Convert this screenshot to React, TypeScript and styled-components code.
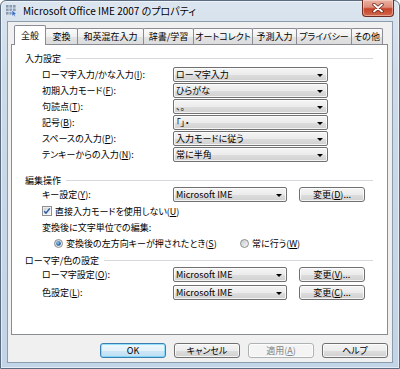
import React from "react";
import styled, { createGlobalStyle } from "styled-components";

const Global = createGlobalStyle`
  html, body { margin: 0; padding: 0; background: #ffffff; }
  body { width: 400px; height: 369px; overflow: hidden; }
  * { box-sizing: border-box; }
`;

const UI_FONT = `"Noto Sans CJK JP", "Noto Sans", sans-serif`;

const Window = styled.div`
  width: 400px;
  height: 369px;
  display: flex;
  flex-direction: column;
  background: linear-gradient(180deg, #dbe5ef 0%, #cddbe9 20%, #c2d4e7 100%);
  border: 1px solid #5b6c80;
  border-radius: 6px 6px 0 0;
  box-shadow: inset 0 0 0 1px rgba(255, 255, 255, 0.55);
  font-family: ${UI_FONT};
  font-feature-settings: "palt";
  color: #000;
`;

const TitleBar = styled.div`
  height: 20px;
  display: flex;
  align-items: flex-start;
  padding-left: 4px;
`;

const TitleIcon = styled.svg`
  width: 13px;
  height: 13px;
  margin-top: 3px;
  flex: none;
`;

const TitleText = styled.div`
  margin-left: 5px;
  font-size: 10px;
  line-height: 19px;
  white-space: nowrap;
  text-shadow: 0 0 6px rgba(255, 255, 255, 0.9);
`;

const CloseButton = styled.div`
  margin-left: auto;
  margin-right: 5px;
  margin-top: -1px;
  width: 32px;
  height: 17px;
  border: 1px solid #6e2c22;
  border-top: none;
  border-radius: 0 0 4px 4px;
  background: linear-gradient(180deg, #eab3a5 0%, #dd8d78 45%, #c6442a 55%, #d2684b 100%);
  box-shadow: inset 0 0 0 1px rgba(255, 220, 210, 0.5);
  display: flex;
  align-items: center;
  justify-content: center;
`;

const Client = styled.div`
  flex: 1;
  margin: 0 6px 5px;
  background: #f0f0f0;
  border: 1px solid #8d9cad;
  display: flex;
  flex-direction: column;
  padding: 3px 4px 0 3px;
`;

const TabStrip = styled.div`
  height: 19px;
  display: flex;
  align-items: flex-end;
  padding-left: 3px;
  flex: none;
`;

const Tab = styled.div<{ $w: number; $active?: boolean }>`
  position: relative;
  z-index: ${(p) => (p.$active ? 2 : 1)};
  width: ${(p) => p.$w}px;
  height: ${(p) => (p.$active ? 20 : 16)}px;
  margin-bottom: ${(p) => (p.$active ? -1 : 0)}px;
  margin-left: -1px;
  &:first-child { margin-left: 0; }
  border: 1px solid #898c95;
  border-bottom: none;
  border-radius: 2px 2px 0 0;
  background: ${(p) =>
    p.$active
      ? "#ffffff"
      : "linear-gradient(180deg, #fbfbfb 0%, #f0f0f0 50%, #e3e3e3 51%, #dcdcdc 100%)"};
  display: flex;
  align-items: center;
  justify-content: center;
  font-size: 9px;
  white-space: nowrap;
  padding-bottom: ${(p) => (p.$active ? 1 : 0)}px;
`;

const Panel = styled.div`
  flex: 1;
  background: #ffffff;
  border: 1px solid #898c95;
  padding: 7px 14px 0 13px;
  display: flex;
  flex-direction: column;
`;

const Heading = styled.div<{ $mt: number }>`
  margin-top: ${(p) => p.$mt}px;
  height: 12px;
  display: flex;
  align-items: center;
  gap: 5px;
  font-size: 9px;
  white-space: nowrap;
  &::after {
    content: "";
    flex: 1;
    height: 1px;
    background: #d5d9dd;
  }
`;

const FieldGrid = styled.div<{ $cols: string; $gap: number; $mt: number }>`
  margin: ${(p) => p.$mt}px 0 0 17px;
  display: grid;
  grid-template-columns: ${(p) => p.$cols};
  grid-auto-rows: 15px;
  row-gap: ${(p) => p.$gap}px;
  column-gap: 12px;
  align-items: center;
`;

const Label = styled.div`
  font-size: 9px;
  line-height: 15px;
  white-space: nowrap;
`;

const Acc = styled.span`
  text-decoration: underline;
`;

const ComboBox = styled.div`
  height: 15px;
  border: 1px solid #707070;
  border-radius: 2px;
  background: linear-gradient(180deg, #f4f4f4 0%, #ececec 50%, #dedede 51%, #d0d0d0 100%);
  box-shadow: inset 0 0 0 1px rgba(255, 255, 255, 0.75);
  display: flex;
  align-items: center;
  padding: 0 4px 0 2px;
  font-size: 9px;
  white-space: nowrap;
  overflow: hidden;
`;

const ComboValue = styled.span`
  flex: 1;
  overflow: hidden;
`;

const Arrow = styled.span`
  width: 0;
  height: 0;
  border-left: 3px solid transparent;
  border-right: 3px solid transparent;
  border-top: 3px solid #000;
  margin-top: 1px;
`;

const PushButton = styled.div<{ $variant?: "default" | "disabled" }>`
  height: 15px;
  width: 66px;
  border: 1px solid
    ${(p) => (p.$variant === "default" ? "#3c7fb1" : p.$variant === "disabled" ? "#adb2b5" : "#707070")};
  border-radius: 3px;
  background: ${(p) =>
    p.$variant === "disabled"
      ? "#f4f4f4"
      : p.$variant === "default"
      ? "linear-gradient(180deg, #eef7fc 0%, #e3f1fa 50%, #cfe7f6 51%, #bddff3 100%)"
      : "linear-gradient(180deg, #f4f4f4 0%, #ececec 50%, #dedede 51%, #d0d0d0 100%)"};
  box-shadow: inset 0 0 0 1px
    ${(p) => (p.$variant === "default" ? "rgba(72, 205, 250, 0.55)" : "rgba(255, 255, 255, 0.75)")};
  color: ${(p) => (p.$variant === "disabled" ? "#838383" : "#000")};
  display: flex;
  align-items: center;
  justify-content: center;
  font-size: 9px;
  white-space: nowrap;
`;

const OptionLine = styled.div<{ $ml: number; $mt?: number }>`
  margin: ${(p) => p.$mt ?? 0}px 0 0 ${(p) => p.$ml}px;
  height: 16px;
  display: flex;
  align-items: center;
  font-size: 9px;
  white-space: nowrap;
`;

const Choice = styled.div<{ $w?: number }>`
  display: flex;
  align-items: center;
  gap: 3px;
  width: ${(p) => (p.$w ? `${p.$w}px` : "auto")};
`;

const ButtonRow = styled.div`
  flex: none;
  display: flex;
  justify-content: flex-end;
  gap: 8px;
  padding: 8px 0 4px;
`;

const CheckBox = () => (
  <svg width="10" height="10" viewBox="0 0 10 10">
    <defs>
      <linearGradient id="cbg" x1="0" y1="0" x2="1" y2="1">
        <stop offset="0" stopColor="#cbcfd5" />
        <stop offset="1" stopColor="#f6f6f6" />
      </linearGradient>
    </defs>
    <rect x="0.5" y="0.5" width="9" height="9" fill="#fff" stroke="#8e8f8f" />
    <rect x="1.5" y="1.5" width="7" height="7" fill="url(#cbg)" />
    <path d="M2.2 5.2 L4 7.2 L7.8 2.4" fill="none" stroke="#2b5a9c" strokeWidth="1.5" />
  </svg>
);

const Radio = ({ on }: { on?: boolean }) => (
  <svg width="9" height="9" viewBox="0 0 9 9">
    <defs>
      <linearGradient id="rbg" x1="0" y1="0" x2="1" y2="1">
        <stop offset="0" stopColor="#c6cbd1" />
        <stop offset="1" stopColor="#f7f7f7" />
      </linearGradient>
      <radialGradient id="rdot" cx="0.4" cy="0.4" r="0.6">
        <stop offset="0" stopColor="#a7d4f5" />
        <stop offset="0.6" stopColor="#2f7cc4" />
        <stop offset="1" stopColor="#15467e" />
      </radialGradient>
    </defs>
    <circle cx="4.5" cy="4.5" r="4" fill="url(#rbg)" stroke="#8e8f8f" />
    {on && <circle cx="4.5" cy="4.5" r="2.3" fill="url(#rdot)" />}
  </svg>
);

const Combo = ({ value }: { value: string }) => (
  <ComboBox>
    <ComboValue>{value}</ComboValue>
    <Arrow />
  </ComboBox>
);

const tabs: { label: string; w: number; active?: boolean }[] = [
  { label: "全般", w: 32, active: true },
  { label: "変換", w: 33 },
  { label: "和英混在入力", w: 67 },
  { label: "辞書/学習", w: 51 },
  { label: "オートコレクト", w: 60 },
  { label: "予測入力", w: 45 },
  { label: "プライバシー", w: 56 },
  { label: "その他", w: 32 },
];

export default function App() {
  return (
    <>
      <Global />
      <Window>
        <TitleBar>
          <TitleIcon viewBox="0 0 13 13">
            {[0, 1, 2].map((r) =>
              [0, 1, 2].map((c) => (
                <rect
                  key={`${r}-${c}`}
                  x={1 + c * 3.5}
                  y={1 + r * 3.5}
                  width="2.6"
                  height="2.6"
                  fill={r === 2 && c === 2 ? "none" : "#8a9bb0"}
                />
              ))
            )}
            <path d="M7 6 L7 12.5 L8.6 11 L9.8 13 L10.8 12.4 L9.7 10.5 L11.8 10.3 Z" fill="#2f68c8" stroke="#fff" strokeWidth="0.6" />
          </TitleIcon>
          <TitleText>Microsoft Office IME 2007 のプロパティ</TitleText>
          <CloseButton>
            <svg width="12" height="10" viewBox="0 0 12 10">
              <path d="M2 1.5 L10 8.5 M10 1.5 L2 8.5" stroke="#6b2519" strokeWidth="3.4" strokeLinecap="round" />
              <path d="M2 1.5 L10 8.5 M10 1.5 L2 8.5" stroke="#ffffff" strokeWidth="1.8" strokeLinecap="round" />
            </svg>
          </CloseButton>
        </TitleBar>
        <Client>
          <TabStrip>
            {tabs.map((t) => (
              <Tab key={t.label} $w={t.w} $active={t.active}>
                {t.label}
              </Tab>
            ))}
          </TabStrip>
          <Panel>
            <Heading $mt={0}>入力設定</Heading>
            <FieldGrid $cols="119px 155px" $gap={1} $mt={3}>
              <Label>
                ローマ字入力/かな入力(<Acc>I</Acc>):
              </Label>
              <Combo value="ローマ字入力" />
              <Label>
                初期入力モード(<Acc>F</Acc>):
              </Label>
              <Combo value="ひらがな" />
              <Label>
                句読点(<Acc>T</Acc>):
              </Label>
              <Combo value="、。" />
              <Label>
                記号(<Acc>B</Acc>):
              </Label>
              <Combo value="「」・" />
              <Label>
                スペースの入力(<Acc>P</Acc>):
              </Label>
              <Combo value="入力モードに従う" />
              <Label>
                テンキーからの入力(<Acc>N</Acc>):
              </Label>
              <Combo value="常に半角" />
            </FieldGrid>

            <Heading $mt={12}>編集操作</Heading>
            <FieldGrid $cols="119px 114px 66px" $gap={3} $mt={1}>
              <Label>
                キー設定(<Acc>Y</Acc>):
              </Label>
              <Combo value="Microsoft IME" />
              <PushButton>
                変更(<Acc>D</Acc>)...
              </PushButton>
            </FieldGrid>
            <OptionLine $ml={17} $mt={1}>
              <Choice>
                <CheckBox />
                <span>
                  直接入力モードを使用しない(<Acc>U</Acc>)
                </span>
              </Choice>
            </OptionLine>
            <OptionLine $ml={17}>変換後に文字単位での編集:</OptionLine>
            <OptionLine $ml={29}>
              <Choice $w={186}>
                <Radio on />
                <span>
                  変換後の左方向キーが押されたとき(<Acc>S</Acc>)
                </span>
              </Choice>
              <Choice>
                <Radio />
                <span>
                  常に行う(<Acc>W</Acc>)
                </span>
              </Choice>
            </OptionLine>

            <Heading $mt={3}>ローマ字/色の設定</Heading>
            <FieldGrid $cols="119px 114px 66px" $gap={3} $mt={1}>
              <Label>
                ローマ字設定(<Acc>O</Acc>):
              </Label>
              <Combo value="Microsoft IME" />
              <PushButton>
                変更(<Acc>V</Acc>)...
              </PushButton>
              <Label>
                色設定(<Acc>L</Acc>):
              </Label>
              <Combo value="Microsoft IME" />
              <PushButton>
                変更(<Acc>C</Acc>)...
              </PushButton>
            </FieldGrid>
          </Panel>
          <ButtonRow>
            <PushButton $variant="default">OK</PushButton>
            <PushButton>キャンセル</PushButton>
            <PushButton $variant="disabled">
              適用(<Acc>A</Acc>)
            </PushButton>
            <PushButton>ヘルプ</PushButton>
          </ButtonRow>
        </Client>
      </Window>
    </>
  );
}
